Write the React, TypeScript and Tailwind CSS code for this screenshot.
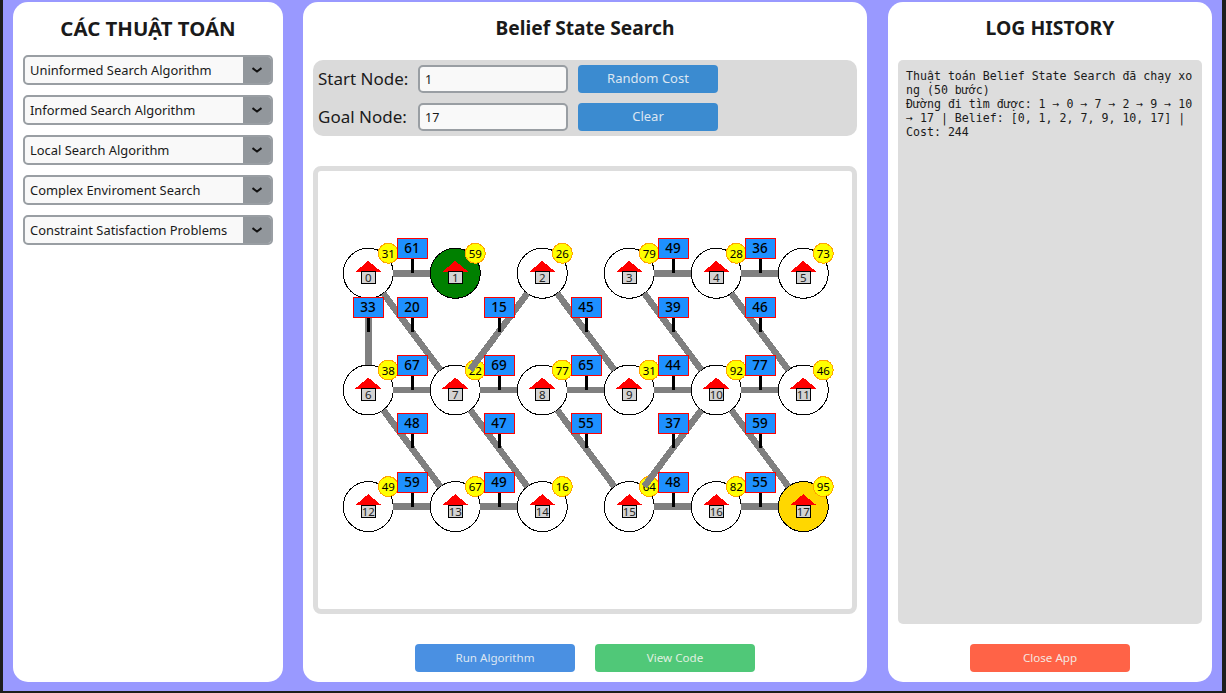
const algorithmGroups = [
  'Uninformed Search Algorithm',
  'Informed Search Algorithm',
  'Local Search Algorithm',
  'Complex Enviroment Search',
  'Constraint Satisfaction Problems',
];

const badges = [31, 59, 26, 79, 28, 73, 38, 22, 77, 31, 92, 46, 49, 67, 16, 64, 82, 95];

const edges: [number, number, number][] = [
  [0, 1, 61],
  [0, 6, 33],
  [0, 7, 20],
  [2, 7, 15],
  [2, 9, 45],
  [3, 4, 49],
  [3, 10, 39],
  [4, 5, 36],
  [4, 11, 46],
  [6, 7, 67],
  [7, 8, 69],
  [8, 9, 65],
  [9, 10, 44],
  [10, 11, 77],
  [6, 13, 48],
  [7, 14, 47],
  [8, 15, 55],
  [10, 15, 37],
  [10, 17, 59],
  [12, 13, 59],
  [13, 14, 49],
  [15, 16, 48],
  [16, 17, 55],
];

const rows = [273.3, 390, 506.6];
const R = 25;

const nodePos = (id: number) => ({
  x: 368.3 + (id % 6) * 87,
  y: rows[Math.floor(id / 6)],
});

const nodeFill = (id: number) => {
  if (id === 1) return '#008000';
  if (id === 17) return '#ffd700';
  return '#ffffff';
};

const Graph = () => (
  <svg viewBox="318 171 534 438" className="block h-[438px] w-[534px]" shapeRendering="crispEdges">
    {badges.map((cost, id) => {
      const { x, y } = nodePos(id);
      return (
        <g key={id}>
          <circle cx={x} cy={y} r={R} fill={nodeFill(id)} stroke="#000000" strokeWidth="1" />
          <polygon points={`${x - 13},${y - 1.5} ${x},${y - 12.5} ${x + 13},${y - 1.5}`} fill="#ff0000" />
          <rect x={x - 7} y={y - 1.5} width="14" height="12" fill="#d3d3d3" stroke="#000000" strokeWidth="1" />
          <text x={x} y={y + 9} textAnchor="middle" className="fill-[#222222] text-[11.5px]">
            {id}
          </text>
          <circle cx={x + 20} cy={y - 20} r="10" fill="#ffff00" stroke="#ffa500" strokeWidth="1" />
          <text x={x + 20} y={y - 15.5} textAnchor="middle" className="fill-black text-[11.5px]">
            {cost}
          </text>
        </g>
      );
    })}
    {edges.map(([from, to]) => {
      const a = nodePos(from);
      const b = nodePos(to);
      const len = Math.hypot(b.x - a.x, b.y - a.y);
      const ux = (b.x - a.x) / len;
      const uy = (b.y - a.y) / len;
      return (
        <line
          key={`${from}-${to}`}
          x1={a.x + ux * R}
          y1={a.y + uy * R}
          x2={b.x - ux * R}
          y2={b.y - uy * R}
          stroke="#808080"
          strokeWidth="6.5"
        />
      );
    })}
    {edges.map(([from, to, cost]) => {
      const a = nodePos(from);
      const b = nodePos(to);
      const mx = (a.x + b.x) / 2 + 0.5;
      const my = (a.y + b.y) / 2;
      const boxX = Math.floor(mx - 15);
      const boxY = Math.round(my - 35);
      return (
        <g key={`label-${from}-${to}`}>
          <rect x={boxX + 14} y={boxY + 20} width="3" height={Math.round(my) - boxY - 20} fill="#000000" />
          <rect x={boxX + 0.5} y={boxY + 0.5} width="30" height="20" fill="#1e90ff" stroke="#ff0000" strokeWidth="1" />
          <text x={boxX + 15} y={boxY + 15} textAnchor="middle" className="fill-black text-[13.5px] font-medium">
            {cost}
          </text>
        </g>
      );
    })}
  </svg>
);

const AlgorithmSelect = ({ label }: { label: string }) => (
  <div className="flex h-[30px] w-[250px] items-stretch overflow-hidden rounded-[5px] border-2 border-[#999ea3] bg-[#f9f9f9]">
    <span className="flex-1 pl-[5px] text-[12.9px] leading-[26px] text-[#1a1a1a]">{label}</span>
    <span className="flex w-[28px] items-center justify-center bg-[#92979c]">
      <svg width="10" height="6" viewBox="0 0 10 6" fill="none" stroke="#111111" strokeWidth="2">
        <path d="M0.5 1 L5 4.5 L9.5 1" />
      </svg>
    </span>
  </div>
);

const NodeField = ({ label, value, action }: { label: string; value: string; action: string }) => (
  <div className="flex h-[28px] items-center">
    <span className="w-[105px] pl-[5px] text-[17px] whitespace-nowrap text-[#1a1a1a]">{label}</span>
    <input
      readOnly
      value={value}
      className="h-[28px] w-[150px] rounded-[5px] border-2 border-[#999ea3] bg-[#f9f9f9] px-[5px] text-[12.5px] text-[#1a1a1a] outline-none"
    />
    <button className="ml-[10px] h-[28px] w-[140px] rounded-[4px] bg-[#3b8bd0] text-[13px] text-[#dbe6f2]">
      {action}
    </button>
  </div>
);

const App = () => (
  <div className="h-[693px] w-[1226px] overflow-hidden bg-[#1e1e1e] pr-[4px] pb-[2px] pl-[3px] font-['Noto_Sans','Open_Sans',sans-serif]">
    <div className="flex h-full gap-[20px] bg-[#9999ff] pt-[2px] pr-[10px] pb-[9px] pl-[10px]">
      <aside className="flex w-[270px] flex-col items-center rounded-[15px] bg-white">
        <h2 className="mt-[12px] h-[41px] text-[20.4px] leading-[28px] font-bold text-[#1a1a1a]">CÁC THUẬT TOÁN</h2>
        <div className="flex flex-col gap-[10px]">
          {algorithmGroups.map((group) => (
            <AlgorithmSelect key={group} label={group} />
          ))}
        </div>
      </aside>

      <main className="flex w-[564px] flex-col rounded-[15px] bg-white px-[10px]">
        <h2 className="mt-[12px] h-[46px] text-center text-[19.2px] leading-[28px] font-bold text-[#1a1a1a]">
          Belief State Search
        </h2>
        <div className="flex h-[76px] flex-col gap-[10px] rounded-[10px] bg-[#dadada] pt-[5px]">
          <NodeField label="Start Node:" value="1" action="Random Cost" />
          <NodeField label="Goal Node:" value="17" action="Clear" />
        </div>
        <div className="mt-[30px] h-[448px] rounded-[8px] border-[5px] border-[#dddddd]">
          <Graph />
        </div>
        <div className="mt-[30px] flex justify-center gap-[20px]">
          <button className="h-[28px] w-[160px] rounded-[4px] bg-[#4a90e2] text-[11.6px] text-[#dbe6f2]">Run Algorithm</button>
          <button className="h-[28px] w-[160px] rounded-[4px] bg-[#50c878] text-[11.6px] text-[#e0f0e0]">View Code</button>
        </div>
      </main>

      <aside className="ml-[1px] flex w-[324px] flex-col rounded-[15px] bg-white px-[10px]">
        <h2 className="mt-[12px] h-[46px] text-center text-[19.4px] leading-[28px] font-bold text-[#1a1a1a]">LOG HISTORY</h2>
        <div className="h-[564px] rounded-[5px] bg-[#dddddd] px-[8px] pt-[9px] font-['DejaVu_Sans_Mono',monospace] text-[11.6px] leading-[14px] break-all whitespace-pre-wrap text-[#1a1a1a]">
          {'Thuật toán Belief State Search đã chạy xong (50 bước)\nĐường đi tìm được: 1 → 0 → 7 → 2 → 9 → 10 → 17 | Belief: [0, 1, 2, 7, 9, 10, 17] | Cost: 244'}
        </div>
        <div className="mt-[20px] flex justify-center">
          <button className="h-[28px] w-[160px] rounded-[4px] bg-[#ff6347] text-[11.6px] text-[#f5e6e0]">Close App</button>
        </div>
      </aside>
    </div>
  </div>
);

export default App;
